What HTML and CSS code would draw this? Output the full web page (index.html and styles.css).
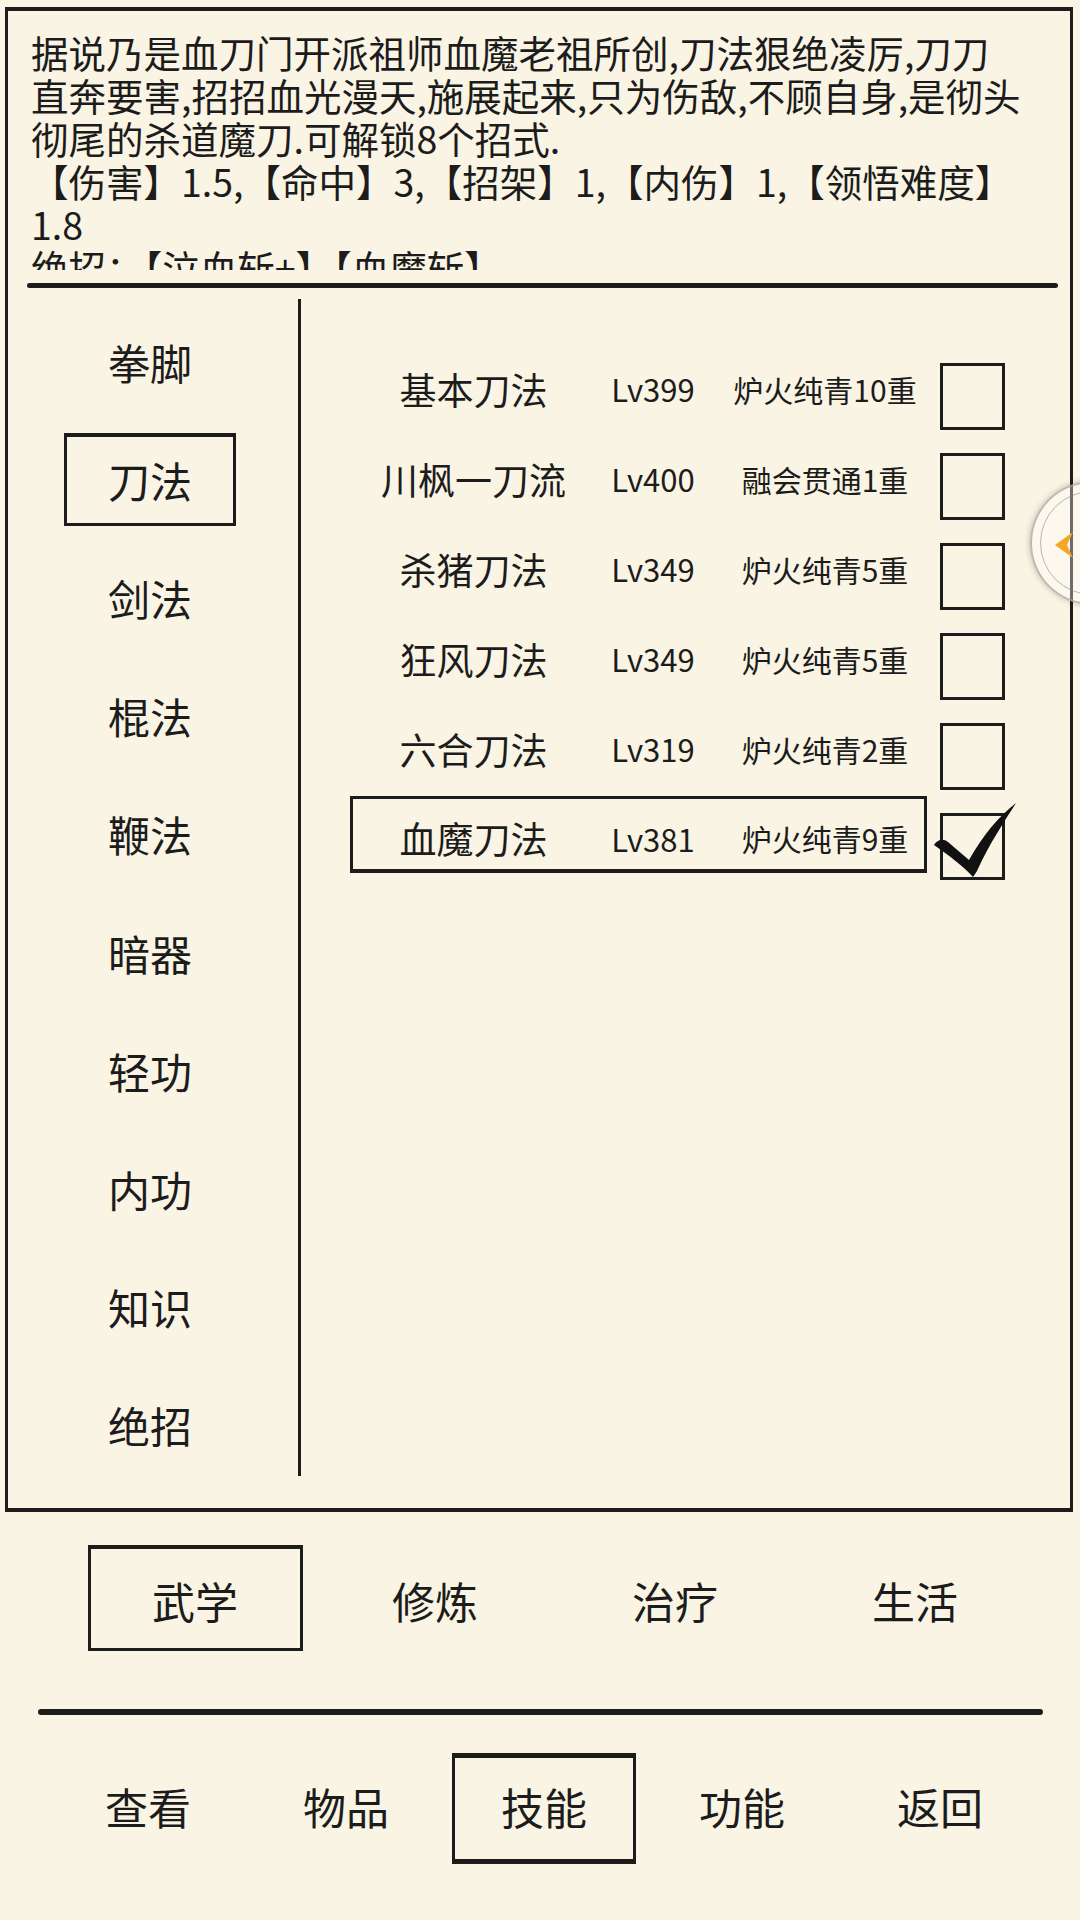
FILE: index.html
```html
<!DOCTYPE html>
<html lang="zh-CN">
<head>
    <meta charset="UTF-8">
    <meta name="viewport" content="width=device-width, initial-scale=1.0">
    <title>技能 - 武学</title>
    <link rel="stylesheet" href="styles.css">
</head>
<body>
    <div class="screen">
        <div class="frame">
            <div class="desc">
                <p class="desc-text">
                    据说乃是血刀门开派祖师血魔老祖所创,刀法狠绝凌厉,刀刀<br>
                    直奔要害,招招血光漫天,施展起来,只为伤敌,不顾自身,是彻头<br>
                    彻尾的杀道魔刀.可解锁8个招式.<br>
                    【伤害】1.5,【命中】3,【招架】1,【内伤】1,【领悟难度】<br>
                    1.8<br>
                    绝招：【泣血斩+】【血魔斩】<br>
                    招式：【血刀经】
                </p>
            </div>
            <div class="rule rule-top"></div>
            <div class="main">
                <ul class="cats">
                    <li><span>拳脚</span></li>
                    <li class="active"><span>刀法</span></li>
                    <li><span>剑法</span></li>
                    <li><span>棍法</span></li>
                    <li><span>鞭法</span></li>
                    <li><span>暗器</span></li>
                    <li><span>轻功</span></li>
                    <li><span>内功</span></li>
                    <li><span>知识</span></li>
                    <li><span>绝招</span></li>
                </ul>
                <div class="skills">
                    <div class="skill-row">
                        <div class="skill-info">
                            <span class="skill-name">基本刀法</span>
                            <span class="skill-lv">Lv399</span>
                            <span class="skill-stage">炉火纯青10重</span>
                        </div>
                        <div class="check"></div>
                    </div>
                    <div class="skill-row">
                        <div class="skill-info">
                            <span class="skill-name">川枫一刀流</span>
                            <span class="skill-lv">Lv400</span>
                            <span class="skill-stage">融会贯通1重</span>
                        </div>
                        <div class="check"></div>
                    </div>
                    <div class="skill-row">
                        <div class="skill-info">
                            <span class="skill-name">杀猪刀法</span>
                            <span class="skill-lv">Lv349</span>
                            <span class="skill-stage">炉火纯青5重</span>
                        </div>
                        <div class="check"></div>
                    </div>
                    <div class="skill-row">
                        <div class="skill-info">
                            <span class="skill-name">狂风刀法</span>
                            <span class="skill-lv">Lv349</span>
                            <span class="skill-stage">炉火纯青5重</span>
                        </div>
                        <div class="check"></div>
                    </div>
                    <div class="skill-row">
                        <div class="skill-info">
                            <span class="skill-name">六合刀法</span>
                            <span class="skill-lv">Lv319</span>
                            <span class="skill-stage">炉火纯青2重</span>
                        </div>
                        <div class="check"></div>
                    </div>
                    <div class="skill-row selected">
                        <div class="skill-info">
                            <span class="skill-name">血魔刀法</span>
                            <span class="skill-lv">Lv381</span>
                            <span class="skill-stage">炉火纯青9重</span>
                        </div>
                        <div class="check">
                            <svg class="tick" viewBox="-10 -14 95 85">
                                <path d="M-6 32 C-3 27 3 25 8 29 L29 47 C43 22 59 3 76 -10 C66 6 49 31 37 58 L33 64 C22 52 8 42 -6 32 Z"/>
                            </svg>
                        </div>
                    </div>
                </div>
            </div>
        </div>

        <div class="tabs">
            <div class="tab active"><span>武学</span></div>
            <div class="tab"><span>修炼</span></div>
            <div class="tab"><span>治疗</span></div>
            <div class="tab"><span>生活</span></div>
        </div>

        <div class="rule rule-bottom"></div>

        <nav class="nav">
            <div class="nav-item"><span>查看</span></div>
            <div class="nav-item"><span>物品</span></div>
            <div class="nav-item active"><span>技能</span></div>
            <div class="nav-item"><span>功能</span></div>
            <div class="nav-item"><span>返回</span></div>
        </nav>

        <div class="side-tab">
            <svg class="side-arrow" viewBox="0 0 20 28">
                <polygon points="0,14 18,1 12,14 18,27"/>
            </svg>
        </div>
    </div>
</body>
</html>
```

FILE: styles.css
```css
body {
    margin: 0;
    padding: 0;
    background-color: #faf4e4;
    font-family: "Noto Sans CJK SC", "Noto Sans", sans-serif;
    color: #1c1c1c;
}
.screen {
    position: relative;
    width: 1080px;
    height: 1920px;
    overflow: hidden;
}
.frame {
    margin: 7px 7px 0 5px;
    height: 1505px;
    box-sizing: border-box;
    border: 3px solid #1c1c1c;
    border-top-width: 4px;
    border-bottom-width: 4px;
}
.desc {
    height: 272px;
    padding: 11px 0 0 23px;
    box-sizing: border-box;
}
.desc-text {
    margin: 0;
    padding-top: 8px;
    height: 248px;
    box-sizing: border-box;
    overflow: hidden;
    font-size: 37.5px;
    line-height: 43px;
    white-space: nowrap;
}
.rule {
    background-color: #1c1c1c;
    border-radius: 3px;
}
.rule-top {
    height: 5px;
    margin: 0 12px 0 19px;
}
.main {
    display: flex;
    height: 1220px;
}
.cats {
    list-style: none;
    margin: 11px 0 0;
    padding: 3px 6px 0 0;
    width: 293px;
    height: 1177px;
    box-sizing: border-box;
    border-right: 3px solid #1c1c1c;
}
.cats li {
    height: 118.2px;
    display: flex;
    align-items: center;
    justify-content: center;
    font-size: 42px;
}
.cats li span {
    width: 172px;
    height: 93px;
    box-sizing: border-box;
    border: 3px solid transparent;
    display: flex;
    align-items: center;
    justify-content: center;
}
.cats li.active span {
    border-color: #1c1c1c;
    border-top-width: 4px;
}
.skills {
    flex: 1;
    padding: 51px 0 0 49px;
}
.skill-row {
    display: flex;
    align-items: center;
    height: 90px;
}
.skill-info {
    display: grid;
    grid-template-columns: 241px 118px 212px;
    align-items: center;
    width: 577px;
    height: 77px;
    box-sizing: border-box;
    border: 3px solid transparent;
    padding-top: 9px;
}
.skill-row.selected .skill-info {
    border-color: #1c1c1c;
    border-bottom-width: 4px;
}
.skill-name {
    text-align: center;
    font-size: 37px;
}
.skill-lv {
    text-align: center;
    font-size: 31px;
}
.skill-stage {
    text-align: center;
    font-size: 30px;
    padding-left: 14px;
}
.check {
    position: relative;
    width: 65px;
    height: 67px;
    margin: 25px 0 0 13px;
    box-sizing: border-box;
    border: 3px solid #1c1c1c;
}
.tick {
    position: absolute;
    left: -13px;
    top: -17px;
    width: 95px;
    height: 85px;
    fill: #111;
}
.tabs {
    display: flex;
    margin: 33px 0 0 75px;
}
.tab {
    width: 240px;
    height: 106px;
    display: flex;
    justify-content: center;
    font-size: 43px;
}
.tab span {
    width: 215px;
    height: 106px;
    box-sizing: border-box;
    border: 3px solid transparent;
    display: flex;
    align-items: center;
    justify-content: center;
    padding-top: 3px;
}
.tab.active span {
    border-color: #1c1c1c;
    border-top-width: 4px;
}
.rule-bottom {
    height: 6px;
    width: 1005px;
    margin: 58px 0 0 38px;
}
.nav {
    display: flex;
    margin: 38px 0 0 49px;
}
.nav-item {
    width: 198px;
    height: 111px;
    display: flex;
    justify-content: center;
    font-size: 43px;
}
.nav-item span {
    width: 184px;
    height: 111px;
    box-sizing: border-box;
    border: 3px solid transparent;
    display: flex;
    align-items: center;
    justify-content: center;
    padding-bottom: 6px;
}
.nav-item.active span {
    border-color: #1c1c1c;
    border-top-width: 5px;
    border-bottom-width: 5px;
}
.side-tab {
    position: absolute;
    left: 1030px;
    top: 481px;
    width: 124px;
    height: 124px;
    box-sizing: border-box;
    border-radius: 50%;
    border: 2px solid rgba(160, 160, 150, 0.7);
    background-color: rgba(255, 255, 255, 0.35);
    box-shadow: 0 0 6px rgba(0, 0, 0, 0.25);
}
.side-tab::before {
    content: "";
    position: absolute;
    top: 8px;
    left: 8px;
    right: 8px;
    bottom: 8px;
    border-radius: 50%;
    border: 1.5px solid rgba(120, 130, 130, 0.55);
}
.side-arrow {
    position: absolute;
    left: 23px;
    top: 48px;
    width: 20px;
    height: 28px;
    fill: #f5a623;
}
```
